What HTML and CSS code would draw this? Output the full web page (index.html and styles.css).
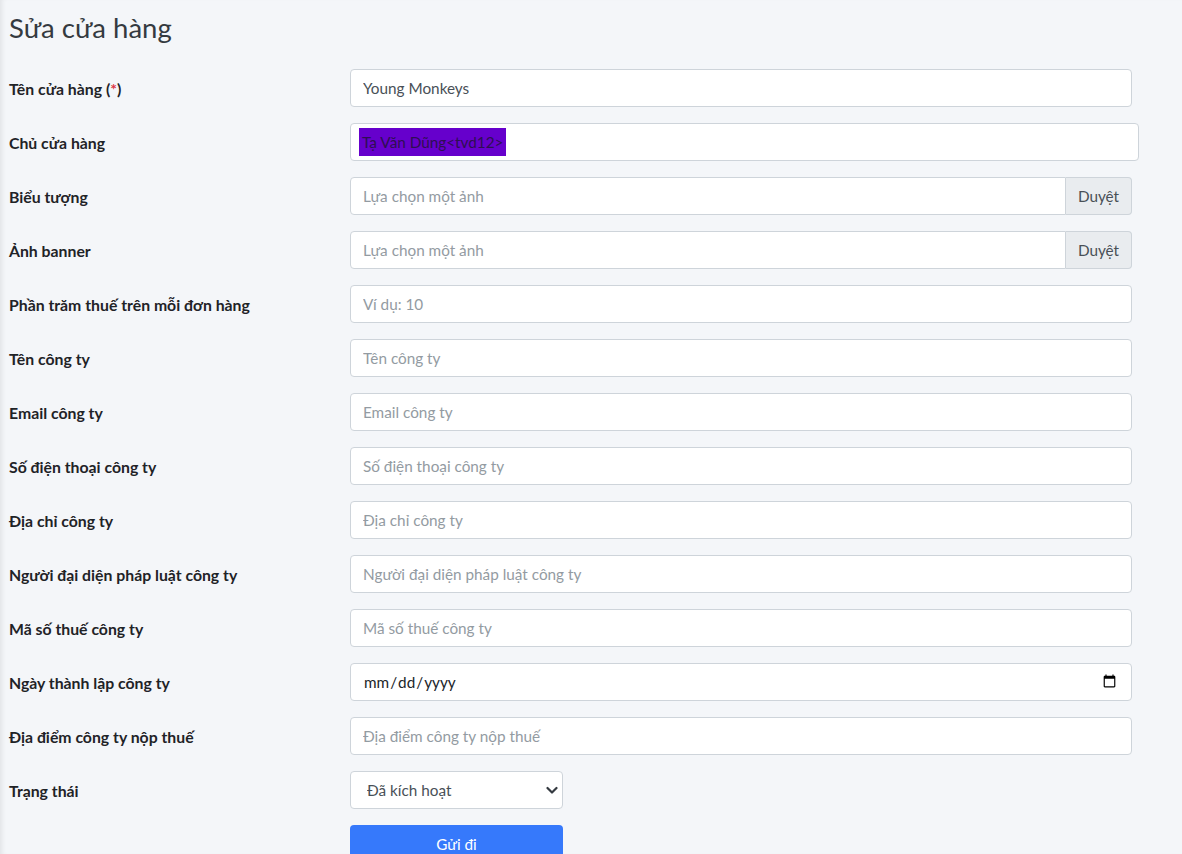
FILE: index.html
```html
<!DOCTYPE html>
<html lang="vi">
<head>
<meta charset="utf-8">
<title>Sửa cửa hàng</title>
<link rel="stylesheet" href="styles.css">
</head>
<body>
<div class="page">
  <h1 class="title">Sửa cửa hàng</h1>
  <form class="form">
    <div class="row">
      <label class="label">Tên cửa hàng (<span class="req">*</span>)</label>
      <input class="control" type="text" value="Young Monkeys">
    </div>
    <div class="row">
      <label class="label">Chủ cửa hàng</label>
      <div class="control owner"><span class="owner-sel">Tạ Văn Dũng&lt;tvd12&gt;</span></div>
    </div>
    <div class="row">
      <label class="label">Biểu tượng</label>
      <div class="group">
        <input class="control group-input" type="text" placeholder="Lựa chọn một ảnh">
        <span class="group-text">Duyệt</span>
      </div>
    </div>
    <div class="row">
      <label class="label">Ảnh banner</label>
      <div class="group">
        <input class="control group-input" type="text" placeholder="Lựa chọn một ảnh">
        <span class="group-text">Duyệt</span>
      </div>
    </div>
    <div class="row">
      <label class="label">Phần trăm thuế trên mỗi đơn hàng</label>
      <input class="control" type="text" placeholder="Ví dụ: 10">
    </div>
    <div class="row">
      <label class="label">Tên công ty</label>
      <input class="control" type="text" placeholder="Tên công ty">
    </div>
    <div class="row">
      <label class="label">Email công ty</label>
      <input class="control" type="text" placeholder="Email công ty">
    </div>
    <div class="row">
      <label class="label">Số điện thoại công ty</label>
      <input class="control" type="text" placeholder="Số điện thoại công ty">
    </div>
    <div class="row">
      <label class="label">Địa chỉ công ty</label>
      <input class="control" type="text" placeholder="Địa chỉ công ty">
    </div>
    <div class="row">
      <label class="label">Người đại diện pháp luật công ty</label>
      <input class="control" type="text" placeholder="Người đại diện pháp luật công ty">
    </div>
    <div class="row">
      <label class="label">Mã số thuế công ty</label>
      <input class="control" type="text" placeholder="Mã số thuế công ty">
    </div>
    <div class="row">
      <label class="label">Ngày thành lập công ty</label>
      <input class="control date" type="date">
    </div>
    <div class="row">
      <label class="label">Địa điểm công ty nộp thuế</label>
      <input class="control" type="text" placeholder="Địa điểm công ty nộp thuế">
    </div>
    <div class="row">
      <label class="label">Trạng thái</label>
      <div class="select-wrap">
        <select class="control select">
          <option>Đã kích hoạt</option>
          <option>Chưa kích hoạt</option>
        </select>
        <svg class="chev" width="12" height="9" viewBox="0 0 12 9"><path d="M1.5 2 L6 6.5 L10.5 2" fill="none" stroke="#343a40" stroke-width="2.2" stroke-linecap="round" stroke-linejoin="round"/></svg>
      </div>
    </div>
    <div class="row">
      <span class="label"></span>
      <button class="submit" type="button">Gửi đi</button>
    </div>
  </form>
</div>
</body>
</html>
```
FILE: styles.css
```css
html, body {
  margin: 0;
  padding: 0;
}
body {
  background: #f4f6f9;
  font-family: Lato, "Liberation Sans", sans-serif;
  color: #212529;
  height: 854px;
  overflow: hidden;
  box-shadow: inset 5px 0 5px -3px rgba(0, 0, 0, 0.08);
}
.page {
  padding: 0 0 0 9px;
}
.title {
  margin: 0;
  padding-top: 11px;
  font-size: 27.5px;
  font-weight: 400;
  line-height: 34px;
  color: #343a40;
  height: 58px;
}
.form {
  display: flex;
  flex-direction: column;
  gap: 16px;
}
.row {
  display: grid;
  grid-template-columns: 341px 782px;
  align-items: center;
  height: 38px;
}
.label {
  font-size: 15.8px;
  font-weight: 700;
  color: #1f2327;
}
.req {
  color: #dc3545;
}
.control {
  box-sizing: border-box;
  height: 38px;
  width: 100%;
  border: 1px solid #ced4da;
  border-radius: 4px;
  background: #fff;
  padding: 0 12px;
  font-family: Lato, "Liberation Sans", sans-serif;
  font-size: 15.3px;
  color: #495057;
  outline: none;
}
.control::placeholder {
  color: #939ba2;
}
.owner {
  width: 789px;
  display: flex;
  align-items: center;
  padding: 0 8px;
}
.owner-sel {
  background: #6600cc;
  color: #2e0f52;
  padding: 5px 3px;
  line-height: 18px;
}
.group {
  display: flex;
}
.group-input {
  flex: 1;
  border-radius: 4px 0 0 4px;
}
.group-text {
  box-sizing: border-box;
  width: 66px;
  height: 38px;
  display: flex;
  align-items: center;
  justify-content: center;
  background: #e9ecef;
  border: 1px solid #ced4da;
  border-left: none;
  border-radius: 0 4px 4px 0;
  color: #495057;
  font-size: 15.3px;
}
.date {
  color: #212529;
}
.select-wrap {
  position: relative;
  width: 213px;
}
.select {
  appearance: none;
  -webkit-appearance: none;
  padding-left: 16px;
  color: #495057;
}
.chev {
  position: absolute;
  right: 5px;
  top: 15px;
  pointer-events: none;
}
.submit {
  width: 213px;
  height: 38px;
  border: none;
  border-radius: 4px;
  background: #3679fb;
  color: #fff;
  font-family: Lato, "Liberation Sans", sans-serif;
  font-size: 15.3px;
  padding: 0;
}
```
